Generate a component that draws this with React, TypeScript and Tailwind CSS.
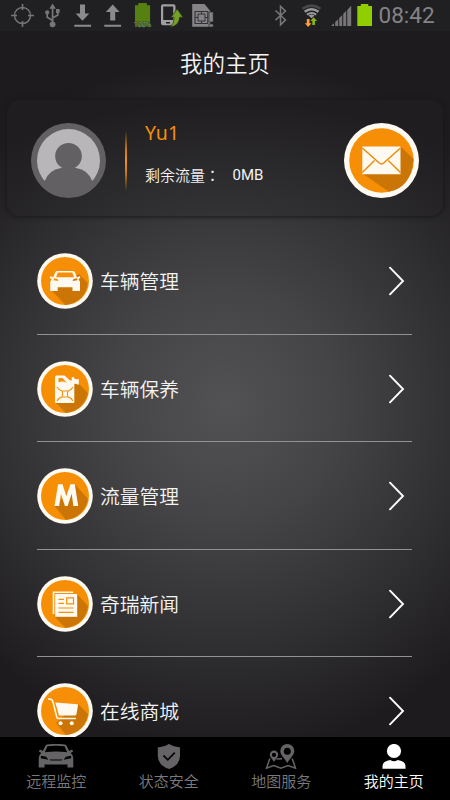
import type { ReactNode } from 'react';

function StatusBar() {
  return (
    <header className="flex h-[31px] shrink-0 items-start bg-[#202022] pl-[9px]">
      <svg width="30" height="31" viewBox="9 0 30 31" fill="none" stroke="#777577" strokeWidth="1.4">
        <circle cx="22.5" cy="15.5" r="8" />
        <path d="M22.5 4v6M22.5 21v6M11 15.5h6M28 15.5h6" strokeWidth="1.6" />
      </svg>
      <svg width="30" height="31" viewBox="39 0 30 31" fill="none" stroke="#777577" strokeWidth="1.7">
        <path d="M52.6 8v15M52.6 20.5l-5.4-3.2v-4M52.6 18l5.2-3v-4" />
        <g fill="#777577" stroke="none">
          <path d="M52.6 3.6l3.3 5.2h-6.6zM56 9h3.6v4H56z" />
          <circle cx="47.2" cy="12.4" r="2.1" />
          <circle cx="52.6" cy="24.3" r="2.9" />
        </g>
      </svg>
      <svg width="30" height="31" viewBox="69 0 30 31" fill="#8c8a8c">
        <path d="M80 4.5h5v9h4.3l-6.8 7.2-6.8-7.2H80zM74.3 24.7h16.8v2.1H74.3z" />
      </svg>
      <svg width="30" height="31" viewBox="99 0 30 31" fill="#8c8a8c">
        <path d="M110.2 20.5v-8.6h-4.4l6.9-7.4 6.9 7.4h-4.4v8.6zM104.3 24.7h16.8v2.1h-16.8z" />
      </svg>
      <svg width="29" height="31" viewBox="129 0 29 31">
        <path d="M135 5.3h3.3V3h8.5v2.3h3.3v21H135z" fill="#568012" />
        <text x="142.5" y="26.8" textAnchor="middle" fontSize="7.2" fontFamily="Roboto, sans-serif" fill="#a3bf8c" stroke="#34451d" strokeWidth="1.2" paintOrder="stroke">100%</text>
      </svg>
      <svg width="29" height="31" viewBox="158 0 29 31">
        <path fillRule="evenodd" d="M163 4.3h10.5q2 0 2 2v17q0 2-2 2H163q-2 0-2-2v-17q0-2 2-2zM163.2 6.6V20h10V6.6zM166 22v1.5h4V22z" fill="#a09ea1" />
        <path d="M170.2 27q4-3 4-9.7h-3.2l6.2-8.3 5.8 8.3h-3.4q-.4 8.6-9.4 9.7z" fill="#739f23" stroke="#26301a" strokeWidth=".7" />
      </svg>
      <svg width="33" height="31" viewBox="187 0 33 31">
        <path d="M192.2 4h12.3l5.8 7v15.7h-18.1z" fill="#858386" />
        <path d="M195 11.5h12.8v12H195z" fill="#858386" stroke="#343236" strokeWidth="1.1" />
        <path d="M198 14h7v7h-7zM201.5 11.5V14M195 17.5h3m7 0h3M201.5 21v2.5" fill="none" stroke="#343236" strokeWidth="1" />
        <path d="M209 12h4.2v10H209zM209 24h4.2v3H209z" fill="#858386" stroke="#232225" strokeWidth=".6" />
      </svg>
      <svg className="ml-auto" width="24" height="31" viewBox="270 0 24 31" fill="none" stroke="#777577" strokeWidth="1.5">
        <path d="M275.5 10.5l10 9.4-5 5V6.3l5 4.8-10 9" />
      </svg>
      <svg width="34" height="31" viewBox="294 0 34 31">
        <g fill="none" strokeWidth="2.5">
          <path d="M302.5 8.8q9-6.4 18 0" stroke="#48464a" />
          <path d="M304.7 11.8q6.8-5 13.8 0" stroke="#9b999c" />
          <path d="M307 14.6q4.7-3.4 9.2 0" stroke="#9b999c" strokeWidth="2" />
        </g>
        <path d="M308.5 15.5q3-1.8 6 0l-3 2.8z" fill="#9b999c" />
        <path d="M306.8 19h2.7v4.2h2l-3.3 3.9-3.4-3.9h2z" fill="#ff9d36" />
        <path d="M312.3 25v-4h-2l3.4-3.8 3.3 3.8h-2v4z" fill="#85b51b" />
      </svg>
      <svg width="26" height="31" viewBox="328 0 26 31" fill="#777577">
        <path d="M331 26l3-2.8V26zM335.2 22l3-2.8V26h-3zM339.2 18l3-3v11h-3zM343.2 14l3-3.2V26h-3zM347.2 10l4-4.2V26h-4z" />
      </svg>
      <svg width="22" height="31" viewBox="354 0 22 31" fill="#91ce00">
        <path d="M357.3 6h3.5V4h7.5v2h3.7v20h-14.7z" />
      </svg>
      <span className="w-[74px] pl-[2.5px] font-['Roboto',sans-serif] text-[22.5px] font-normal leading-[31px] text-[#858386]">08:42</span>
    </header>
  );
}

function Badge({ children, shadow }: { children: ReactNode; shadow: string }) {
  return (
    <svg className="size-14 shrink-0" viewBox="0 0 56 56">
      <circle cx="28" cy="28" r="27.8" fill="#fffaf1" />
      <circle cx="28" cy="28" r="24" fill="#f78f06" />
      <path d={shadow} fill="#cb7506" />
      {children}
    </svg>
  );
}

const rows = [
  {
    label: '车辆管理',
    icon: (
      <Badge shadow="M42 21L50.7 30Q48 49 28.5 52L15 38z">
        <path fillRule="evenodd" fill="#fffaf1" d="M20 18h16q1.5 0 2 1.5l2 5 2.5-1.5 1 2-2 1 1.5 3v9h-7.5v-3.7H20.700V38h-7.500v-9l1.5-3-2-1 1-2 2.500 1.500 2-5q.5-1.500 1.800-1.500zM20.800 19.500l-1.700 4.800h18l-1.800-4.800zM16.500 27.200l5 .7-1-2-3.500-.7zM40.500 27.200l-5 .7 1-2 3.500-.7z" />
      </Badge>
    ),
  },
  {
    label: '车辆保养',
    icon: (
      <Badge shadow="M40 21L50.8 32Q47 49 29 52L18 41z">
        <path fillRule="evenodd" fill="#fffaf1" d="M19.500 14.500h8l5.500 5 2-.5-.5-2.200 2-1 1.500 2.400 3.800-.2v5.800l-4.500-1.300v18.500q0 1-1 1H19q-1 0-1-1V16q0-1.500 1.500-1.500zM21.500 17v4.500q4-2 8.500.5l-4.500-5z" />
        <path d="M20 26q2 3.500 5 4h6q3-.5 5-4M20 40q2-3.500 5-4h6q3 .5 5 4M25 30q1.300 3 0 6M31 30q-1.300 3 0 6" fill="none" stroke="#f78f06" strokeWidth="1.1" />
      </Badge>
    ),
  },
  {
    label: '流量管理',
    icon: (
      <Badge shadow="M38.5 17L51 31Q47 49 29 52L17.500 38z">
        <path d="M17.500 38l3.600-21.700h4.400L29.300 28l4.200-11.700h4.300L41.200 38h-4.800l-1.700-12.300L30.600 38h-2.700l-4-12.300L22.200 38z" fill="#fffaf1" />
      </Badge>
    ),
  },
  {
    label: '奇瑞新闻',
    icon: (
      <Badge shadow="M40 18L51 30Q48 49 28.5 52L17 40z">
        <path d="M15.700 15.500h20.500v1.600H17.300v21h-1.600z" fill="#fffaf1" />
        <path d="M18.200 18h22v22.800h-22z" fill="#fffaf1" />
        <path d="M21.500 23.300h5.500M21.500 27.300h5.500M21.500 32h15M21.500 36.300h15M29.700 21.900h6.800v6h-6.800z" fill="none" stroke="#f78f06" strokeWidth="1.2" />
      </Badge>
    ),
  },
  {
    label: '在线商城',
    icon: (
      <Badge shadow="M41 21L51 31Q48 49 29 52L19 40z">
        <path d="M11.500 16q3.800-.5 4.500 3l3.800 15.200q.3 1.200 1.500 1.200h17" fill="none" stroke="#fffaf1" strokeWidth="1.5" strokeLinecap="round" />
        <path d="M18.300 19.500l22 1.700q.8 0 .7 1L39.500 31q-.3 1.500-1.800 1.500H22z" fill="#fffaf1" />
        <circle cx="23.500" cy="40.300" r="2" fill="#fffaf1" />
        <circle cx="34.800" cy="40.300" r="2" fill="#fffaf1" />
      </Badge>
    ),
  },
];

const tabs = [
  {
    label: '远程监控',
    icon: (
      <svg width="38" height="25" viewBox="0 0 38 25">
        <path fillRule="evenodd" fill="#656366" d="M10 .5Q19-.7 28 .5q1 .2 1.7 1.5l2.4 5 2.9-1.4 1.2 2-2.5 1.5Q36.3 11 36.3 14v9.5h-5.8v-3h-23v3H1.700V14q0-3 2.6-4.900L1.800 7.600l1.2-2L5.900 7l2.400-5Q9 .7 10 .5zm.5 1.700L7.800 8.300Q19 6.700 30.200 8.300l-2.700-6.100Q19 1.300 10.500 2.200zM3.800 14.300l7.400 1.500-2-3-5.200-1zM34.200 14.300l-7.400 1.500 2-3 5.200-1zM12.500 15.500h13l-1 1h-11z" />
      </svg>
    ),
  },
  {
    label: '状态安全',
    icon: (
      <svg width="38" height="25" viewBox="0 0 38 25">
        <path fill="#656366" d="M19 0Q23.500 3 30 3.500V12q0 9.200-11 13Q7.800 21.200 7.800 12V3.500Q14.500 3 19 0z" />
        <path d="M13.500 11.500l4.300 4.300 7-7.200" fill="none" stroke="#080808" strokeWidth="1.8" />
      </svg>
    ),
  },
  {
    label: '地图服务',
    icon: (
      <svg width="38" height="25" viewBox="0 0 38 25">
        <g fill="#656366" fillRule="evenodd">
          <path d="M25.300 0a7 7 0 0 1 7 7.100c0 4-4 6.800-7 12-3-5.200-7-8-7-12A7 7 0 0 1 25.300 0zm0 3.700a3.500 3.500 0 1 0 0 7 3.500 3.500 0 0 0 0-7z" />
          <path d="M12 6.500a4.200 4.200 0 0 1 4.200 4.200c0 2.500-2.400 4-4.200 7.200-1.800-3.200-4.200-4.700-4.200-7.200A4.200 4.200 0 0 1 12 6.500zm0 2.300a2.100 2.100 0 1 0 0 4.200 2.100 2.100 0 0 0 0-4.200z" />
        </g>
        <path d="M7.800 14.500L4.500 24.200l7.200-2.700 7.200 2.700 7.200-2.700 7.400 2.700-3.300-9.700M14.500 15l5.500-.3" fill="none" stroke="#656366" strokeWidth="1.500" />
      </svg>
    ),
  },
  {
    label: '我的主页',
    active: true,
    icon: (
      <svg width="38" height="25" viewBox="0 0 38 25" fill="#fff">
        <circle cx="19" cy="7" r="7.1" />
        <path d="M7.500 24.700v-2.500q0-4 4.800-5.500l3-.8q3.700 2.800 7.400 0l3 .8q4.800 1.500 4.800 5.500v2.500z" />
      </svg>
    ),
  },
];

export default function App() {
  return (
    <div className="flex h-[800px] w-[450px] flex-col overflow-hidden bg-[#1d1b1e] font-['Noto_Sans_CJK_SC',sans-serif] font-[350] text-[#f4f4f4]">
      <StatusBar />
      <main className="flex min-h-0 flex-1 flex-col overflow-hidden bg-[radial-gradient(ellipse_340px_350px_at_50%_374px,#525153_0%,#454446_32%,#302f31_68%,#1d1b1e_100%)]">
        <h1 className="h-[69px] shrink-0 text-center text-[22.5px] leading-[62px]">我的主页</h1>
        <section className="mx-[7px] flex h-[116px] shrink-0 items-center rounded-[13px] bg-[radial-gradient(ellipse_300px_150px_at_50%_150px,#383739_0%,#2c2b2d_50%,#1f1d20_100%)] pr-[24px] pl-[24px] pt-[5px] shadow-[0_0_4px_1px_#19181a]">
          <svg className="size-[75px] shrink-0" viewBox="0 0 75 75">
            <circle cx="37.5" cy="37.5" r="37.500" fill="#626063" />
            <circle cx="37.5" cy="37.5" r="31.500" fill="#b8b6b9" />
            <path d="M13.500 58.500Q18 46.500 30 45l15 0q12 1.500 16.500 13.500Q53 71 37.500 71T13.500 58.500z" fill="#626063" />
            <circle cx="37.5" cy="33.200" r="13.300" fill="#626063" />
          </svg>
          <div className="ml-[18.500px] h-[60px] w-[2px] shrink-0 bg-[linear-gradient(180deg,#f78f0600,#c87911_30%,#f39316_50%,#c87911_70%,#f78f0600)]" />
          <div className="ml-[18.500px] flex h-[75px] flex-1 flex-col">
            <div className="h-[40px] font-['Noto_Sans',sans-serif] text-[19.500px] font-normal leading-[19px] tracking-[0.2px] text-[#f78f06]">Yu1</div>
            <div className="flex text-[15px] leading-[24px]">
              <span className="w-[87.500px]">
                剩余流量<span className="font-['Noto_Sans_CJK_TC',sans-serif]">：</span>
              </span>
              <span className="font-['Roboto',sans-serif] font-normal">0MB</span>
            </div>
          </div>
          <svg className="size-[75px] shrink-0" viewBox="0 0 75 75">
            <circle cx="37.5" cy="37.5" r="37.500" fill="#fffaf1" />
            <circle cx="37.5" cy="37.5" r="32.300" fill="#f78f06" />
            <path d="M56.500 23.500L69.500 36Q67 65 45 68.800L18.300 50.500z" fill="#cb7506" />
            <path d="M18.300 23.500h38.200v27.700H18.300z" fill="#fffaf1" />
            <path d="M18.300 25l17 15q2.200 1.800 4.400 0l16.800-15M18.300 49.500l12.200-12M56.500 49.500l-12.200-12" fill="none" stroke="#ec8b0b" strokeWidth="1.500" />
          </svg>
        </section>
        <ul className="mr-[38px] ml-[37px] mt-[11px]">
          {rows.map((row) => (
            <li key={row.label} className="flex h-[107.500px] items-center border-b border-[#929193] pt-[2px]">
              {row.icon}
              <span className="ml-[7px] text-[19.800px] leading-none">{row.label}</span>
              <svg className="mr-[7px] ml-auto" width="17" height="30" viewBox="0 0 17 30" fill="none" stroke="#fff" strokeWidth="1.900" strokeLinecap="round">
                <path d="M2 1.700L15 15 2 28.300" />
              </svg>
            </li>
          ))}
        </ul>
      </main>
      <nav className="grid h-[63px] shrink-0 grid-cols-4 bg-black">
        {tabs.map((tab) => (
          <div key={tab.label} className={tab.active ? 'flex flex-col items-center pt-[7px] text-white' : 'flex flex-col items-center pt-[7px] text-[#7b797c]'}>
            {tab.icon}
            <span className="mt-[3px] text-[15px] leading-[18px]">{tab.label}</span>
          </div>
        ))}
      </nav>
    </div>
  );
}
